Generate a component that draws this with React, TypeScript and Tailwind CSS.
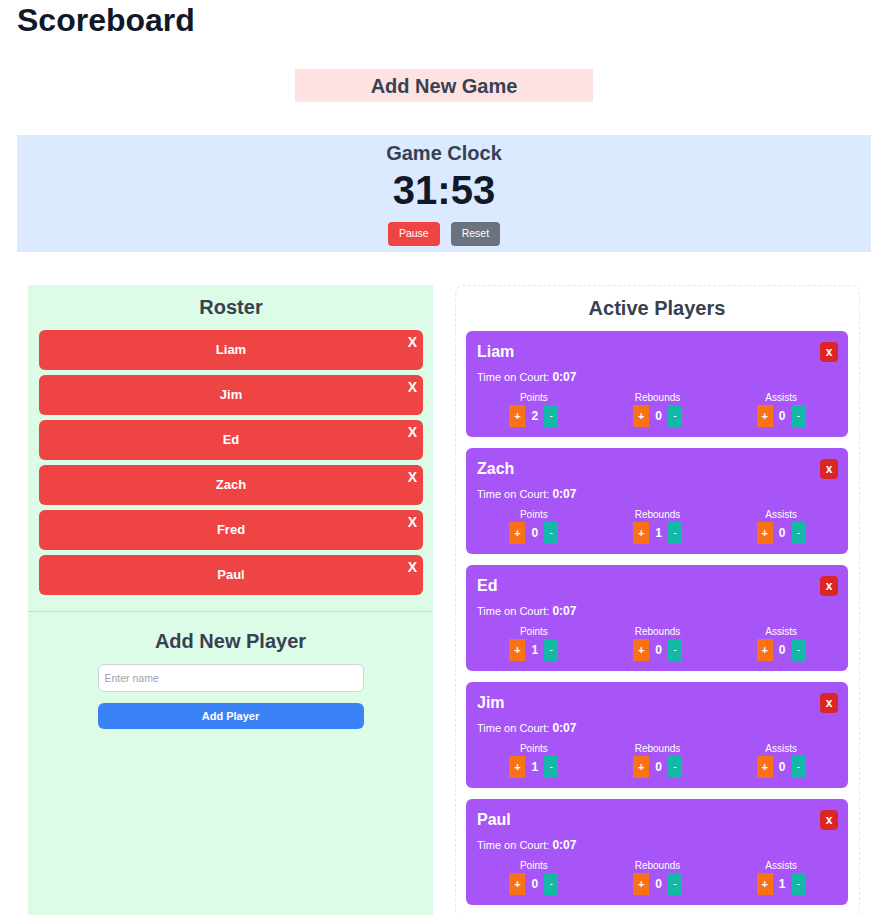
import { useState } from "react";

type Player = {
  name: string;
  points: number;
  rebounds: number;
  assists: number;
};

const roster = ["Liam", "Jim", "Ed", "Zach", "Fred", "Paul"];

const active: Player[] = [
  { name: "Liam", points: 2, rebounds: 0, assists: 0 },
  { name: "Zach", points: 0, rebounds: 1, assists: 0 },
  { name: "Ed", points: 1, rebounds: 0, assists: 0 },
  { name: "Jim", points: 1, rebounds: 0, assists: 0 },
  { name: "Paul", points: 0, rebounds: 0, assists: 1 },
];

function Stat({ label, value }: { label: string; value: number }) {
  return (
    <div className="flex flex-col items-center">
      <div className="text-[10px] leading-[12px] text-white">{label}</div>
      <div className="mt-[1px] flex items-center gap-[6px]">
        <button className="h-[22px] w-4 bg-[#f97316] text-white text-[11px] font-bold leading-none">+</button>
        <span className="text-xs font-bold text-white">{value}</span>
        <button className="h-[22px] w-[14px] bg-[#14b8a6] text-white text-[10px] leading-none">-</button>
      </div>
    </div>
  );
}

function PlayerCard({ player }: { player: Player }) {
  return (
    <div className="bg-[#a855f7] rounded-md pl-[11px] pr-[10px] pt-[7px] pb-[10px]">
      <div className="flex items-center justify-between h-7">
        <h3 className="text-base font-bold text-white leading-7">{player.name}</h3>
        <button className="w-[18px] h-5 bg-[#dc2626] rounded-sm text-white text-xs font-bold flex items-center justify-center">
          x
        </button>
      </div>
      <div className="mt-[1px] h-5 flex items-center text-[11px] text-white">
        Time on Court:&nbsp;<span className="text-xs font-bold">0:07</span>
      </div>
      <div className="mt-[5px] -ml-[5px] -mr-[5px] grid grid-cols-3">
        <Stat label="Points" value={player.points} />
        <Stat label="Rebounds" value={player.rebounds} />
        <Stat label="Assists" value={player.assists} />
      </div>
    </div>
  );
}

export default function App() {
  const [name, setName] = useState("");

  return (
    <div className="min-h-screen bg-white font-['Liberation_Sans',Arial,sans-serif] pl-[17px] pr-[15px]">
      <h1 className="pt-[2px] text-[32px] font-bold text-[#111827] leading-9">Scoreboard</h1>

      <div className="mt-[31px] mx-auto w-[298px] h-[33px] bg-[#fee2e2] flex items-center justify-center">
        <h2 className="text-xl font-bold text-[#374151]">Add New Game</h2>
      </div>

      <div className="mt-[33px] bg-[#dbeafe] pt-1 pb-1.5 flex flex-col items-center">
        <h2 className="text-xl font-semibold text-[#374151] leading-7">Game Clock</h2>
        <div className="mt-[3px] text-[40px] leading-[40px] font-bold text-[#111827]">31:53</div>
        <div className="mt-3 flex gap-[11px]">
          <button className="h-6 px-[11px] bg-[#ef4444] text-white text-[10.5px] rounded">Pause</button>
          <button className="h-6 px-[11px] bg-[#6b7280] text-white text-[10.5px] rounded">Reset</button>
        </div>
      </div>

      <div className="mt-[33px] px-[11px] grid grid-cols-2 gap-[22px]">
        <div className="bg-[#dcfce7]">
          <div className="pt-2 pl-[11px] pr-[10px] pb-4 border-b border-[#d1d5db]">
            <h2 className="text-xl font-bold text-[#374151] text-center leading-7">Roster</h2>
            <div className="mt-[9px] flex flex-col gap-[5px]">
              {roster.map((p) => (
                <div
                  key={p}
                  className="relative h-10 bg-[#ef4444] rounded-md flex items-center justify-center text-[13px] font-bold text-white"
                >
                  <span className="-mt-[1px]">{p}</span>
                  <span className="absolute top-[2px] right-[6px] text-sm font-bold text-white">X</span>
                </div>
              ))}
            </div>
          </div>
          <div className="pt-[15px] pb-8 flex flex-col items-center">
            <h2 className="text-xl font-bold text-[#374151] leading-7">Add New Player</h2>
            <input
              value={name}
              onChange={(e) => setName(e.target.value)}
              placeholder="Enter name"
              className="mt-[9px] w-[266px] h-7 bg-white border border-[#d1d5db] rounded-md pl-[6px] text-[10.5px] placeholder:text-[#9ca3af] outline-none"
            />
            <button className="mt-[11px] w-[266px] h-[26px] bg-[#3b82f6] rounded-md text-[11px] font-bold text-white">
              Add Player
            </button>
          </div>
        </div>

        <div className="border border-dashed border-[#e5e7eb] rounded-lg pt-2 pl-[10px] pr-[11px] pb-3">
          <h2 className="text-xl font-bold text-[#374151] text-center leading-7">Active Players</h2>
          <div className="mt-[9px] flex flex-col gap-[11px]">
            {active.map((p) => (
              <PlayerCard key={p.name} player={p} />
            ))}
          </div>
        </div>
      </div>
    </div>
  );
}
